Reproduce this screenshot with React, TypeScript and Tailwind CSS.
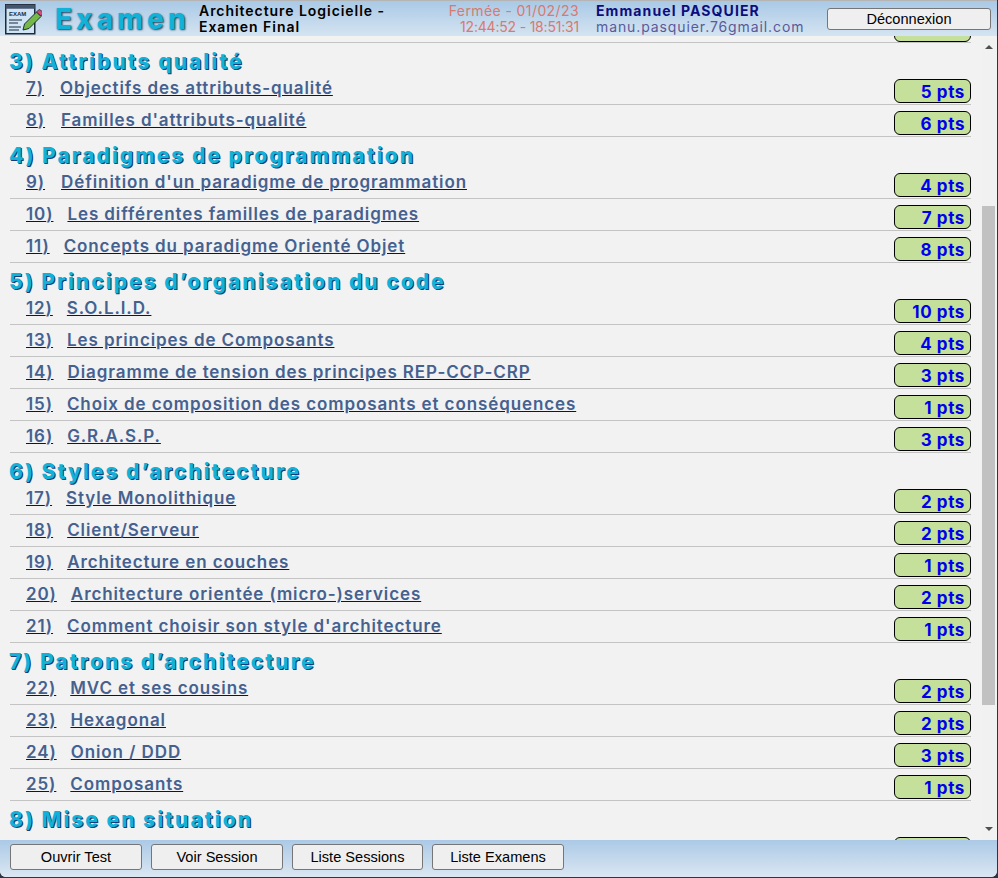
import React from 'react';

type Row = { n: number; title: string; pts: number };
type Section = { title: string; rows: Row[] };

const sections: Section[] = [
  {
    title: '3) Attributs qualité',
    rows: [
      { n: 7, title: 'Objectifs des attributs-qualité', pts: 5 },
      { n: 8, title: "Familles d'attributs-qualité", pts: 6 },
    ],
  },
  {
    title: '4) Paradigmes de programmation',
    rows: [
      { n: 9, title: "Définition d'un paradigme de programmation", pts: 4 },
      { n: 10, title: 'Les différentes familles de paradigmes', pts: 7 },
      { n: 11, title: 'Concepts du paradigme Orienté Objet', pts: 8 },
    ],
  },
  {
    title: '5) Principes d’organisation du code',
    rows: [
      { n: 12, title: 'S.O.L.I.D.', pts: 10 },
      { n: 13, title: 'Les principes de Composants', pts: 4 },
      { n: 14, title: 'Diagramme de tension des principes REP-CCP-CRP', pts: 3 },
      { n: 15, title: 'Choix de composition des composants et conséquences', pts: 1 },
      { n: 16, title: 'G.R.A.S.P.', pts: 3 },
    ],
  },
  {
    title: '6) Styles d’architecture',
    rows: [
      { n: 17, title: 'Style Monolithique', pts: 2 },
      { n: 18, title: 'Client/Serveur', pts: 2 },
      { n: 19, title: 'Architecture en couches', pts: 1 },
      { n: 20, title: 'Architecture orientée (micro-)services', pts: 2 },
      { n: 21, title: "Comment choisir son style d'architecture", pts: 1 },
    ],
  },
  {
    title: '7) Patrons d’architecture',
    rows: [
      { n: 22, title: 'MVC et ses cousins', pts: 2 },
      { n: 23, title: 'Hexagonal', pts: 2 },
      { n: 24, title: 'Onion / DDD', pts: 3 },
      { n: 25, title: 'Composants', pts: 1 },
    ],
  },
];

const font = "[font-family:Inter,'Liberation_Sans',sans-serif]";

const Badge = ({ pts }: { pts?: number }) => (
  <div className="w-[77px] h-[24px] mt-[6px] shrink-0 rounded-[6px] border border-black bg-[#c5e09b] text-right pr-[5px] text-[17px] leading-[24px] font-bold tracking-[0.6px] text-[#0000ee]">
    {pts !== undefined && `${pts} pts`}
  </div>
);

const ExamRow = ({ row }: { row: Row }) => (
  <div className="h-[32px] flex border-b border-[#c4c4c4]">
    <div className="flex-1 pl-[16px] pt-[2px] text-[17px] leading-[26px] font-semibold tracking-[0.9px] text-[#45618f]">
      <a className="underline decoration-[#0000cc]" href="#">{row.n})</a>
      <a className={`underline decoration-[#0000cc] ${row.n > 9 ? 'ml-[14px]' : 'ml-[16px]'}`} href="#">{row.title}</a>
    </div>
    <Badge pts={row.pts} />
  </div>
);

const Heading = ({ children }: { children: React.ReactNode }) => (
  <h2 className="h-[30px] pt-[4px] -ml-[1px] text-[21px] leading-[30px] font-extrabold tracking-[2px] text-[#12b2d8] [text-shadow:1px_1px_0_#1c3a78]">
    {children}
  </h2>
);

const Logo = () => (
  <svg width="37" height="34" viewBox="0 0 37 34" className="shrink-0">
    <rect x="0.75" y="2.75" width="29" height="29" fill="#cfe4f4" stroke="#1f2a3a" strokeWidth="1.5" />
    <rect x="0.75" y="2.75" width="29" height="4" fill="#44566c" />
    <text x="4" y="14" fontSize="6" fontWeight="700" fontFamily="Liberation Sans" fill="#1f2a3a">EXAM</text>
    <path d="M4 18h13M4 21h9M4 25h12M4 28h10" stroke="#1f2a3a" strokeWidth="1" />
    <path d="M18 28l1.5-6 12-12 4.5 4.5-12 12z" fill="#74b943" stroke="#1f2a3a" strokeWidth="1" />
    <path d="M31.5 10l2-2q1-1 2 0l2 2q1 1 0 2l-1.500 2z" fill="#d8477a" stroke="#1f2a3a" strokeWidth="0.8" />
  </svg>
);

const FootButton = ({ label, w }: { label: string; w: string }) => (
  <button className={`${w} h-[26px] pt-[1px] rounded-[3px] border border-[#767676] bg-[#efefef] text-[14.6px] text-black [font-family:'Liberation_Sans',sans-serif]`}>
    {label}
  </button>
);

export default function App() {
  return (
    <div className="h-[878px] w-[998px] bg-[#2a3648]">
      <div className={`h-[877px] w-[997px] overflow-hidden flex flex-col rounded-b-[6px] bg-[#f2f2f2] ${font}`}>
        {/* Header */}
        <header className="h-[36px] shrink-0 flex items-center border-t border-[#b5b5b5] bg-gradient-to-b from-[#a9c9e6] to-[#d5e4f1] pl-[5px]">
          <Logo />
          <div className="ml-[13px] w-[144px] text-[28px] leading-[36px] font-extrabold tracking-[4px] text-[#12b2d8] [text-shadow:1px_1px_2px_#24405f]">
            Examen
          </div>
          <div className="w-[215px] text-[14px] leading-[16px] font-semibold tracking-[0.95px] text-black">
            Architecture Logicielle -<br />Examen Final
          </div>
          <div className="w-[165px] text-right text-[14px] leading-[16px] tracking-[0.4px] text-[#d9796f]">
            Fermée - 01/02/23<br /><span className="tracking-[-0.2px]">12:44:52 - 18:51:31</span>
          </div>
          <div className="ml-[17px] w-[231px] text-[14px] leading-[16px] tracking-[0.9px] text-[#5a5a9a]">
            <span className="font-bold tracking-[1.1px] text-[#0c0c7c]">Emmanuel PASQUIER</span><br />manu.pasquier.76gmail.com
          </div>
          <button className="w-[164px] h-[22px] mt-[1px] rounded-[3px] border border-[#767676] bg-[#efefef] text-[14.6px] leading-[18px] text-black [font-family:'Liberation_Sans',sans-serif]">
            Déconnexion
          </button>
        </header>

        {/* Scrolling list */}
        <main className="relative flex-1 overflow-hidden pl-[10px] pr-[26px]">
          <div className="h-[7px] overflow-hidden border-b border-[#c4c4c4] flex justify-end">
            <div className="w-[77px] h-[24px] -mt-[18px] rounded-[6px] border border-black bg-[#c5e09b]" />
          </div>
          {sections.map((s) => (
            <section key={s.title}>
              <Heading>{s.title}</Heading>
              {s.rows.map((r) => <ExamRow key={r.n} row={r} />)}
            </section>
          ))}
          <Heading>8) Mise en situation</Heading>
          <div className="flex justify-end">
            <Badge />
          </div>

          {/* scrollbar */}
          <div className="absolute right-[2px] top-0 bottom-0 w-[13px] bg-[#f1f1f1]">
            <div className="absolute left-[3px] top-[9px] w-0 h-0 border-x-[4px] border-x-transparent border-b-[4px] border-b-[#505050]" />
            <div className="absolute left-0 top-[170px] w-[13px] h-[499px] bg-[#c1c1c1]" />
            <div className="absolute left-[3px] bottom-[9px] w-0 h-0 border-x-[4px] border-x-transparent border-t-[4px] border-t-[#505050]" />
          </div>
        </main>

        {/* Footer */}
        <footer className="h-[37px] shrink-0 flex gap-[9px] pl-[10px] pt-[4px] bg-gradient-to-b from-[#abc9e6] to-[#dbe7f2]">
          <FootButton label="Ouvrir Test" w="w-[132px]" />
          <FootButton label="Voir Session" w="w-[132px]" />
          <FootButton label="Liste Sessions" w="w-[131px]" />
          <FootButton label="Liste Examens" w="w-[132px]" />
        </footer>
      </div>
    </div>
  );
}
